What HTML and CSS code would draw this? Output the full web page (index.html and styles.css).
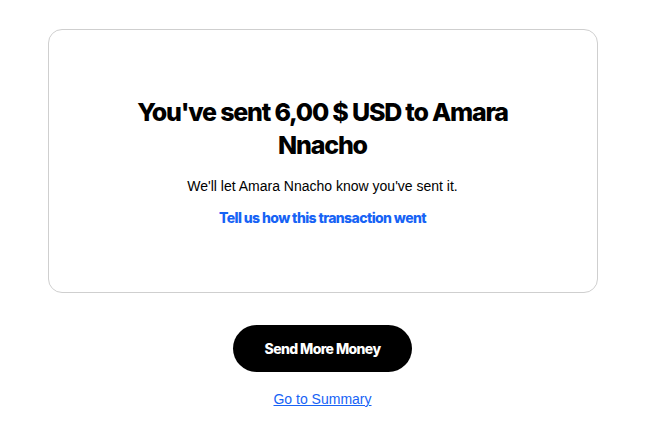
FILE: index.html
```html
<!DOCTYPE html>
<html>
<head>
<meta charset="utf-8">
<link rel="stylesheet" href="styles.css">
</head>
<body>
<main class="page">
  <section class="card">
    <h1 class="title">You've sent 6,00 $ USD to Amara Nnacho</h1>
    <p class="note">We'll let Amara Nnacho know you've sent it.</p>
    <a class="feedback" href="#">Tell us how this transaction went</a>
  </section>
  <button class="primary">Send More Money</button>
  <a class="summary" href="#">Go to Summary</a>
</main>
</body>
</html>
```
FILE: styles.css
```css
* { box-sizing: border-box; }
html, body { margin: 0; padding: 0; background: #fff; }
body { font-family: "Liberation Sans", Arial, sans-serif; color: #000; }
.page {
  width: 645px;
  padding-top: 29px;
  display: flex;
  flex-direction: column;
  align-items: center;
}
.card {
  width: 550px;
  height: 264px;
  border: 1px solid #cfcfcf;
  border-radius: 14px;
  display: flex;
  flex-direction: column;
  align-items: center;
  padding-top: 66px;
}
.title {
  margin: 0;
  width: 380px;
  text-align: center;
  font-family: Inter, "Noto Sans", sans-serif;
  font-weight: 800;
  font-size: 25px;
  line-height: 33px;
  letter-spacing: -1.2px;
}
.note {
  margin: 15px 0 0;
  font-size: 14px;
  line-height: 18px;
}
.feedback {
  margin-top: 14px;
  font-family: Inter, "Noto Sans", sans-serif;
  font-weight: 800;
  font-size: 14px;
  line-height: 18px;
  letter-spacing: -0.6px;
  color: #1763f5;
  text-decoration: none;
}
.primary {
  margin-top: 32px;
  width: 179px;
  height: 47px;
  border: 0;
  border-radius: 24px;
  background: #000;
  color: #fff;
  font-family: Inter, "Noto Sans", sans-serif;
  font-weight: 800;
  font-size: 14px;
  letter-spacing: -0.6px;
}
.summary {
  margin-top: 18px;
  font-size: 14px;
  line-height: 18px;
  color: #1763f5;
  text-decoration: underline;
}
```
